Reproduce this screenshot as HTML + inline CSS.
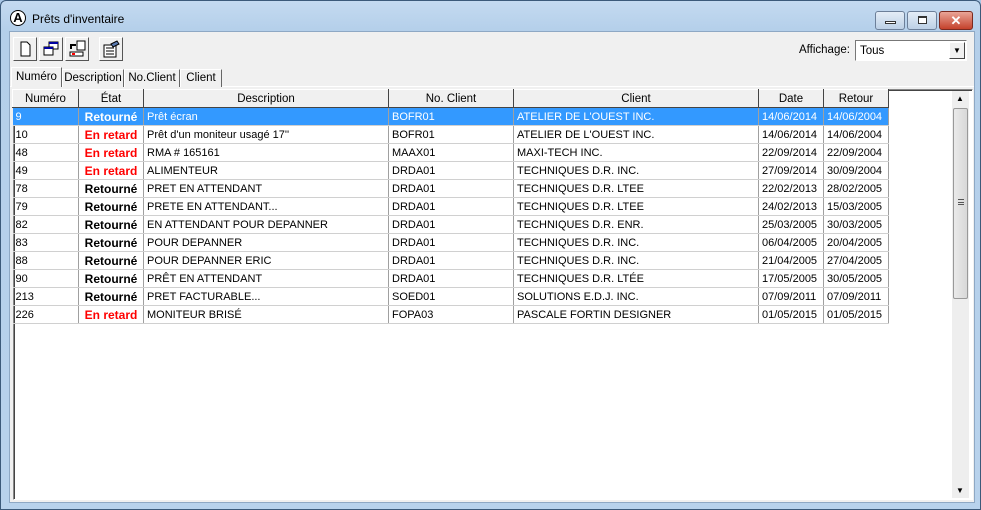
<!DOCTYPE html>
<html><head><meta charset="utf-8"><style>
*{margin:0;padding:0;box-sizing:border-box}
body{width:981px;height:510px;overflow:hidden;background:#a9c7e6;font-family:"Liberation Sans",sans-serif;font-size:11px;position:relative}
.frame{position:absolute;left:0;top:0;width:981px;height:510px;background:linear-gradient(#c4daf0,#b4cfea 30px,#b8d2ec);border:1px solid #3c5a7a;border-radius:6px 6px 0 0}
.title{position:absolute;left:31px;top:11px;font-size:12px;color:#000}
.content{position:absolute;left:8px;top:30px;width:966px;height:472px;background:#f0f0f0;border:1px solid #8ea8c4}
.btn{position:absolute;top:5px;width:24px;height:24px;background:#f0f0f0;border:1px solid;border-color:#fff #555 #555 #fff}
.wb{position:absolute;top:10px;height:19px;border:1px solid #6c7f99;border-radius:3px;background:linear-gradient(#e4edf7,#bcd0e6)}
.tab{position:absolute;top:37px;height:18px;border:1px solid;border-bottom:none;border-color:#fff #666 transparent #fff;background:#f0f0f0;font-size:11.5px;text-align:center;line-height:16px}
.grid{position:absolute;left:3px;top:57px;width:960px;height:411px;background:#fff;border:1px solid;border-color:#888 #fff #fff #888;box-shadow:inset 1px 1px 0 #444}
table{position:absolute;left:-2px;top:-1px;border-collapse:collapse;font-size:11px;table-layout:fixed}
td,th{height:18px;border-right:1px solid #a0a0a0;border-bottom:1px solid #d0d0d0;padding:0 3px;white-space:nowrap;overflow:hidden;font-weight:normal}
th{background:#f0f0f0;border:1px solid;border-color:#fff #444 #444 #fff;text-align:center;height:18px;font-size:11.5px}
tr.sel td{background:#3399ff;color:#fff}
.b{font-weight:bold;text-align:center;font-size:12px}
.r{color:#f00}
.sb{position:absolute;left:938px;top:1px;width:17px;height:407px;background:#eee}
.thumb{position:absolute;left:1px;top:17px;width:15px;height:191px;border:1px solid #999;border-radius:2px;background:linear-gradient(90deg,#eaeaea,#d8d8d8)}
</style></head><body>
<div class="frame">
<div style="position:absolute;left:9px;top:9px;width:16px;height:16px;border-radius:50%;border:1px solid #000;background:#fff;font-weight:bold;font-size:13px;text-align:center;line-height:14px">A</div>
<div class="title">Prêts d'inventaire</div>
<div class="wb" style="left:874px;width:30px"><div style="position:absolute;left:9px;top:9px;width:11px;height:3px;border:1px solid #333;background:#fff"></div></div>
<div class="wb" style="left:906px;width:30px"><div style="position:absolute;left:10px;top:4px;width:9px;height:8px;border:1px solid #333;border-top-width:2px;background:#fff"></div></div>
<div class="wb" style="left:938px;width:34px;background:linear-gradient(#e9a597,#c5412b);border-color:#7a2a20;color:#fff;font-weight:bold;text-align:center;line-height:17px;font-size:13px">✕</div>
<div class="content">
<div class="btn" style="left:3px"><svg width="22" height="22"><path d="M7 4h6l3 3v11H7z" fill="#fff" stroke="#000"/></svg></div>
<div class="btn" style="left:29px"><svg width="22" height="22"><rect x="9" y="4" width="9" height="7" fill="#fff" stroke="#000"/><rect x="9" y="4" width="9" height="2" fill="#0000a0"/><rect x="4" y="9" width="9" height="8" fill="#fff" stroke="#000"/><rect x="4" y="9" width="9" height="2" fill="#0000a0"/></svg></div>
<div class="btn" style="left:55px"><svg width="22" height="22"><rect x="11" y="3" width="8" height="9" fill="#fff" stroke="#000"/><path d="M5 11V7h5" stroke="#000" stroke-width="2" fill="none"/><rect x="4" y="14" width="13" height="4" fill="#fff" stroke="#000"/><rect x="6" y="15" width="3" height="2" fill="#f00"/></svg></div>
<div class="btn" style="left:89px"><svg width="22" height="22"><rect x="4" y="7" width="12" height="12" fill="#fff" stroke="#000"/><path d="M6 10h8M6 13h8M6 16h8" stroke="#000"/><path d="M11 6l6-3 2 3-6 3z" fill="#5a7ab0" stroke="#000"/></svg></div>
<div style="position:absolute;left:789px;top:12px;font-size:11.5px">Affichage:</div>
<div style="position:absolute;left:845px;top:8px;width:112px;height:21px;border:1px solid;border-color:#777 #fff #fff #777;background:#fff;padding:4px 4px;font-size:11.5px">Tous<div style="position:absolute;right:1px;top:1px;width:16px;height:17px;background:#f0f0f0;border:1px solid;border-color:#fff #444 #444 #fff;font-size:8px;text-align:center;line-height:16px">▼</div></div>
<div style="position:absolute;left:0;top:54px;width:964px;border-top:1px solid #fff"></div>
<div class="tab" style="left:1px;top:35px;width:51px;height:20px;z-index:2;line-height:18px">Numéro</div>
<div class="tab" style="left:52px;width:62px">Description</div>
<div class="tab" style="left:114px;width:56px">No.Client</div>
<div class="tab" style="left:170px;width:42px">Client</div>
<div class="grid">
<table>
<colgroup><col style="width:66px"><col style="width:65px"><col style="width:245px"><col style="width:125px"><col style="width:245px"><col style="width:65px"><col style="width:65px"></colgroup>
<tr><th>Numéro</th><th>État</th><th>Description</th><th>No. Client</th><th>Client</th><th>Date</th><th>Retour</th></tr>
<tr class="sel"><td>9</td><td class="b">Retourné</td><td>Prêt écran</td><td>BOFR01</td><td>ATELIER DE L'OUEST INC.</td><td>14/06/2014</td><td>14/06/2004</td></tr>
<tr><td>10</td><td class="b r">En retard</td><td>Prêt d'un moniteur usagé 17''</td><td>BOFR01</td><td>ATELIER DE L'OUEST INC.</td><td>14/06/2014</td><td>14/06/2004</td></tr>
<tr><td>48</td><td class="b r">En retard</td><td>RMA # 165161</td><td>MAAX01</td><td>MAXI-TECH INC.</td><td>22/09/2014</td><td>22/09/2004</td></tr>
<tr><td>49</td><td class="b r">En retard</td><td>ALIMENTEUR</td><td>DRDA01</td><td>TECHNIQUES D.R. INC.</td><td>27/09/2014</td><td>30/09/2004</td></tr>
<tr><td>78</td><td class="b">Retourné</td><td>PRET EN ATTENDANT</td><td>DRDA01</td><td>TECHNIQUES D.R. LTEE</td><td>22/02/2013</td><td>28/02/2005</td></tr>
<tr><td>79</td><td class="b">Retourné</td><td>PRETE EN ATTENDANT...</td><td>DRDA01</td><td>TECHNIQUES D.R. LTEE</td><td>24/02/2013</td><td>15/03/2005</td></tr>
<tr><td>82</td><td class="b">Retourné</td><td>EN ATTENDANT POUR DEPANNER</td><td>DRDA01</td><td>TECHNIQUES D.R. ENR.</td><td>25/03/2005</td><td>30/03/2005</td></tr>
<tr><td>83</td><td class="b">Retourné</td><td>POUR DEPANNER</td><td>DRDA01</td><td>TECHNIQUES D.R. INC.</td><td>06/04/2005</td><td>20/04/2005</td></tr>
<tr><td>88</td><td class="b">Retourné</td><td>POUR DEPANNER ERIC</td><td>DRDA01</td><td>TECHNIQUES D.R. INC.</td><td>21/04/2005</td><td>27/04/2005</td></tr>
<tr><td>90</td><td class="b">Retourné</td><td>PRÊT EN ATTENDANT</td><td>DRDA01</td><td>TECHNIQUES D.R. LTÉE</td><td>17/05/2005</td><td>30/05/2005</td></tr>
<tr><td>213</td><td class="b">Retourné</td><td>PRET FACTURABLE...</td><td>SOED01</td><td>SOLUTIONS E.D.J. INC.</td><td>07/09/2011</td><td>07/09/2011</td></tr>
<tr><td>226</td><td class="b r">En retard</td><td>MONITEUR BRISÉ</td><td>FOPA03</td><td>PASCALE FORTIN DESIGNER</td><td>01/05/2015</td><td>01/05/2015</td></tr>
</table>
<div class="sb"><div style="position:absolute;top:3px;left:4px;font-size:8px">▲</div><div class="thumb"><div style="position:absolute;left:4px;top:90px;width:6px;height:6px;border-top:1px solid #555;border-bottom:1px solid #555"><div style="margin-top:2px;border-top:1px solid #555"></div></div></div><div style="position:absolute;bottom:3px;left:4px;font-size:8px">▼</div></div>
</div>
</div>
</div>
</body></html>
